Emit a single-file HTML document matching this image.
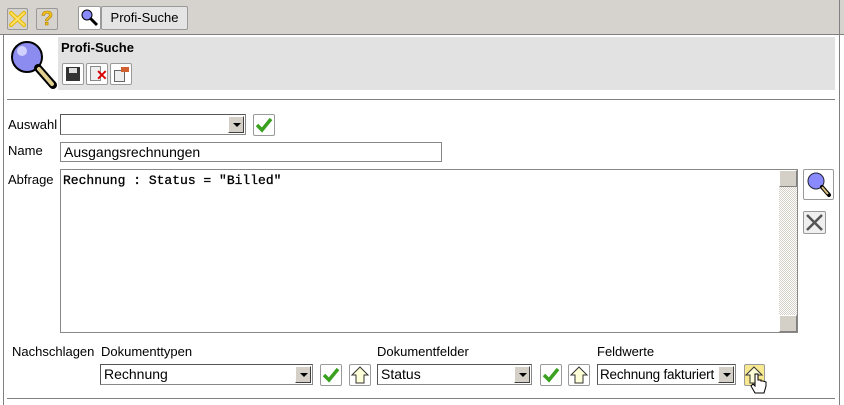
<!DOCTYPE html>
<html><head><meta charset="utf-8"><style>
*{box-sizing:border-box}
body{margin:0;width:844px;height:405px;background:#fff;font-family:"Liberation Sans",sans-serif;font-size:13px;position:relative;overflow:hidden}
.a{position:absolute}
.btn{position:absolute;border:1px solid #9a9a9a;background:#f4f4f4;border-radius:2px}
.sel{position:absolute;border:1px solid #888;border-top-color:#555;border-left-color:#555;background:#fff;height:21px;font-size:14px;padding:2px 3px;line-height:15px}
.sel .dd{position:absolute;right:1px;top:1px;width:16px;height:17px;background:#d4d0c8;border:1px solid;border-color:#fff #404040 #404040 #fff}
.sel .dd:after{content:"";position:absolute;left:4px;top:6px;border:4px solid transparent;border-top:4px solid #000;border-bottom:0}
.lbl{position:absolute;font-size:13px}
</style></head><body>
<div class="a" style="left:0;top:0;width:844px;height:35px;background:#d6d3ce;border-bottom:1px solid #808080"></div>
<div class="a" style="left:3px;top:35px;width:1px;height:370px;background:#808080"></div>
<div class="a" style="left:839px;top:0;width:1px;height:405px;background:#808080"></div>
<div class="btn" style="left:7px;top:8px;width:21px;height:22px;background:#d6d3ce;border-color:#999">
<svg width="19" height="20"><path d="M3 4L16 16M16 4L3 16" stroke="#e6b800" stroke-width="4" stroke-linecap="round"/><path d="M3 4L16 16M16 4L3 16" stroke="#ffe066" stroke-width="2" stroke-linecap="round"/></svg></div>
<div class="btn" style="left:36px;top:8px;width:22px;height:22px;background:#d6d3ce;border-color:#999">
<span class="a" style="left:4px;top:-1px;font-size:20px;color:#f0c020;font-weight:bold;-webkit-text-stroke:0.6px #b08000">?</span></div>
<div class="btn" style="left:78px;top:6px;width:23px;height:24px;background:#fff"><svg width="21" height="22"><circle cx="8" cy="8" r="5" fill="#8a8aff" stroke="#000"/><path d="M11 11L18 18" stroke="#000" stroke-width="3"/></svg></div>
<div class="btn" style="left:101px;top:6px;width:87px;height:24px;background:#e4e4e4;text-align:center;line-height:22px;font-size:13px">Profi-Suche</div>
<div class="a" style="left:58px;top:37px;width:777px;height:53px;background:#e2e2e2"></div>
<svg class="a" style="left:8px;top:38px" width="50" height="52"><circle cx="19" cy="19" r="15" fill="#8c8cf0" stroke="#000" stroke-width="2"/><circle cx="14" cy="13" r="5" fill="#d0d0ff"/><path d="M30 30L45 47" stroke="#000" stroke-width="8" stroke-linecap="round"/><path d="M31 31L44 46" stroke="#e0d090" stroke-width="4" stroke-linecap="round"/></svg>
<div class="a" style="left:61px;top:40px;font-weight:bold;font-size:13px">Profi-Suche</div>
<div class="btn" style="left:62px;top:63px;width:22px;height:22px;background:#fff"><div class="a" style="left:3px;top:3px;width:14px;height:14px;background:#333"></div><div class="a" style="left:6px;top:4px;width:8px;height:5px;background:#ddd"></div></div>
<div class="btn" style="left:86px;top:63px;width:22px;height:22px;background:#fff"><div class="a" style="left:3px;top:2px;width:11px;height:15px;background:#eee;border:1px solid #888"></div><span class="a" style="left:9px;top:3px;color:#d00;font-weight:bold;font-size:14px">✕</span></div>
<div class="btn" style="left:110px;top:63px;width:22px;height:22px;background:#fff"><div class="a" style="left:3px;top:6px;width:11px;height:12px;background:#eee;border:1px solid #666"></div><div class="a" style="left:10px;top:3px;width:8px;height:5px;background:#d06030"></div></div>
<div class="a" style="left:7px;top:99px;width:828px;height:1px;background:#808080"></div>
<div class="lbl" style="left:8px;top:117px">Auswahl</div>
<div class="sel" style="left:60px;top:114px;width:186px"><div class="dd"></div></div>
<div class="btn" style="left:253px;top:114px;width:22px;height:22px;background:#fff"><svg width="20" height="20"><path d="M3 10L8 15L17 4" stroke="#3aa020" stroke-width="3.5" fill="none"/></svg></div>
<div class="lbl" style="left:8px;top:143px">Name</div>
<div class="a" style="left:60px;top:142px;width:382px;height:20px;border:1px solid #888;padding:2px 3px;font-size:14px;line-height:15px">Ausgangsrechnungen</div>
<div class="lbl" style="left:8px;top:172px">Abfrage</div>
<div class="a" style="left:60px;top:169px;width:738px;height:164px;border:1px solid #888;padding:3px 2px;font-family:'Liberation Mono',monospace;font-size:13px;-webkit-text-stroke:0.3px #000">Rechnung : Status = "Billed"</div>
<div class="a" style="left:779px;top:170px;width:18px;height:162px;background:repeating-conic-gradient(#d4d0c8 0 25%,#fff 0 50%) 0 0/2px 2px"></div>
<div class="a" style="left:779px;top:170px;width:18px;height:17px;background:#d4d0c8;border:1px solid;border-color:#fff #808080 #808080 #fff"></div>
<div class="a" style="left:779px;top:315px;width:18px;height:17px;background:#d4d0c8;border:1px solid;border-color:#fff #808080 #808080 #fff"></div>
<div class="btn" style="left:803px;top:169px;width:31px;height:31px;background:#fff"><svg width="29" height="29"><circle cx="12" cy="11" r="8" fill="#8a8aff" stroke="#223"/><path d="M18 17L25 25" stroke="#000" stroke-width="4" stroke-linecap="round"/><path d="M18 17L24 24" stroke="#d8c080" stroke-width="2"/></svg></div>
<div class="btn" style="left:803px;top:211px;width:23px;height:23px;background:#f0f0f0"><svg width="21" height="21"><path d="M3 3L18 18M18 3L3 18" stroke="#555" stroke-width="2.5"/></svg></div>
<div class="lbl" style="left:12px;top:344px">Nachschlagen</div>
<div class="lbl" style="left:101px;top:344px">Dokumenttypen</div>
<div class="lbl" style="left:377px;top:344px">Dokumentfelder</div>
<div class="lbl" style="left:597px;top:344px">Feldwerte</div>
<div class="sel" style="left:100px;top:364px;width:213px">Rechnung<div class="dd"></div></div>
<div class="btn" style="left:320px;top:364px;width:22px;height:22px;background:#fff"><svg width="20" height="20"><path d="M3 10L8 15L17 4" stroke="#3aa020" stroke-width="3.5" fill="none"/></svg></div>
<div class="btn" style="left:349px;top:364px;width:22px;height:22px;background:#fff"><svg width="20" height="20"><path d="M10 2L18 10H14V18H6V10H2Z" fill="#ffffd8" stroke="#333"/></svg></div>
<div class="sel" style="left:377px;top:364px;width:155px">Status<div class="dd"></div></div>
<div class="btn" style="left:540px;top:364px;width:22px;height:22px;background:#fff"><svg width="20" height="20"><path d="M3 10L8 15L17 4" stroke="#3aa020" stroke-width="3.5" fill="none"/></svg></div>
<div class="btn" style="left:568px;top:364px;width:22px;height:22px;background:#fff"><svg width="20" height="20"><path d="M10 2L18 10H14V18H6V10H2Z" fill="#ffffd8" stroke="#333"/></svg></div>
<div class="sel" style="left:597px;top:364px;width:139px;overflow:hidden;white-space:nowrap;font-size:13.5px;padding-left:2px;letter-spacing:-0.2px">Rechnung fakturiert<div class="dd"></div></div>
<div class="btn" style="left:744px;top:364px;width:21px;height:22px;background:#f8e890"><svg width="19" height="20"><path d="M9 2L17 10H13V18H5V10H1Z" fill="#ffffd8" stroke="#333"/></svg></div>
<svg class="a" style="left:750px;top:372px" width="18" height="26"><path d="M5 2V14L3 12L1 14L5 21H14L16 14V10L13 9L11 9V8L8 8V2Z" fill="#fff" stroke="#000"/></svg>
<div class="a" style="left:7px;top:398px;width:828px;height:1px;background:#808080"></div>
</body></html>
